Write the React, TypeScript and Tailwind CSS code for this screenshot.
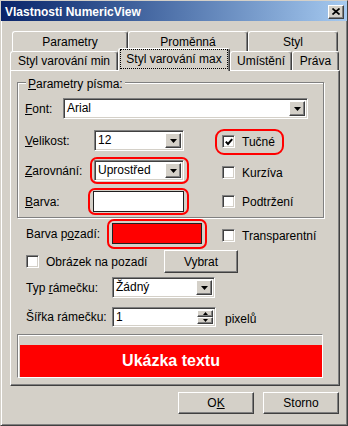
import type { ReactNode } from "react";

const raised =
  "bg-[#d4d0c8] border border-t-white border-l-white border-r-[#404040] border-b-[#404040] shadow-[inset_-1px_-1px_0_#808080]";
const sunken =
  "border border-t-[#808080] border-l-[#808080] border-r-white border-b-white shadow-[inset_1px_1px_0_#404040,inset_-1px_-1px_0_#d4d0c8]";

function Arrow({ up = false }: { up?: boolean }) {
  return (
    <svg width="7" height="4" viewBox="0 0 7 4" className={up ? "rotate-180" : ""}>
      <path d="M0 0h7L3.5 4z" fill="black" />
    </svg>
  );
}

function Combo({ value, width }: { value: string; width: string }) {
  return (
    <div className={`${sunken} ${width} h-[21px] bg-white flex p-[2px] shrink-0`}>
      <span className="flex-1 pl-[1px] leading-[15px]">{value}</span>
      <div className={`${raised} w-[16px] flex items-center justify-center`}>
        <Arrow />
      </div>
    </div>
  );
}

function Check({ checked = false }: { checked?: boolean }) {
  return (
    <div className={`${sunken} w-[13px] h-[13px] bg-white flex items-center justify-center shrink-0`}>
      {checked && (
        <svg width="8" height="8" viewBox="0 0 8 8">
          <path d="M0.8 3.6 L3 6 L7.2 1.2" stroke="black" strokeWidth="2" fill="none" />
        </svg>
      )}
    </div>
  );
}

// red hand-drawn annotation round a control
function Ring({ className }: { className: string }) {
  return <span className={`absolute border-2 border-[#ff0000] pointer-events-none ${className}`} />;
}

function Tab({ w, children }: { w: string; children: ReactNode }) {
  return (
    <div
      className={`${w} h-full border-t border-l border-t-white border-l-white border-r border-r-[#404040] shadow-[inset_-1px_0_0_#808080] rounded-t-[3px] flex items-center justify-center`}
    >
      {children}
    </div>
  );
}

export default function App() {
  return (
    <div className="w-[348px] h-[426px] bg-[#d4d0c8] border border-t-[#d4d0c8] border-l-[#d4d0c8] border-r-[#404040] border-b-[#404040] shadow-[inset_1px_1px_0_white,inset_-1px_-1px_0_#808080] flex flex-col text-[12px] leading-[14px] text-black font-['Liberation_Sans',Arial,sans-serif]">
      {/* title bar */}
      <div className="h-[20px] bg-linear-to-r from-[#0a246a] to-[#a6caf0] flex items-center pl-[4px] pr-[3px] pt-[1px]">
        <span className="flex-1 text-white font-bold text-[12px]">Vlastnosti NumericView</span>
        <div className={`${raised} w-[16px] h-[14px] flex items-center justify-center`}>
          <svg width="8" height="7" viewBox="0 0 8 7">
            <path d="M0.5 0.5L7.5 6.5M7.5 0.5L0.5 6.5" stroke="black" strokeWidth="1.7" />
          </svg>
        </div>
      </div>

      {/* tabs */}
      <div className="mt-[10px] ml-[9px] w-[330px]">
        <div className="flex h-[20px] pl-[2px]">
          <Tab w="w-[116px]">Parametry</Tab>
          <Tab w="w-[120px]">Proměnná</Tab>
          <Tab w="w-[90px]">Styl</Tab>
        </div>
        <div className="flex h-[19px] items-start">
          <Tab w="w-[108px]">Styl varování min</Tab>
          <div className="w-[112px] h-[23px] -mt-[3px] relative z-10 bg-[#d4d0c8] border-t border-l border-t-white border-l-white border-r border-r-[#404040] shadow-[inset_-1px_0_0_#808080] rounded-t-[3px]">
            <span className="absolute left-[1px] right-[1px] top-0 h-[20px] border border-dotted border-black flex items-center justify-center">
              Styl varování max
            </span>
          </div>
          <Tab w="w-[62px]">Umístění</Tab>
          <Tab w="w-[47px]">Práva</Tab>
        </div>
      </div>

      {/* tab page */}
      <div className="ml-[9px] w-[330px] h-[316px] border border-t-white border-l-white border-r-[#404040] border-b-[#404040] shadow-[inset_-1px_-1px_0_#808080] flex flex-col">
        <div className="mt-[11px] ml-[6px] w-[307px] h-[136px] relative border border-[#808080] shadow-[inset_1px_1px_0_white,1px_1px_0_white] flex flex-col shrink-0">
          <span className="absolute left-[8px] -top-[6px] px-[2px] bg-[#d4d0c8]">
            <u>P</u>arametry písma:
          </span>

          <div className="mt-[15px] ml-[7px] h-[21px] flex items-center">
            <span className="w-[38px]">
              <u>F</u>ont:
            </span>
            <Combo value="Arial" width="w-[245px]" />
          </div>

          <div className="mt-[11px] ml-[7px] h-[21px] flex items-center">
            <span className="w-[69px]">
              <u>V</u>elikost:
            </span>
            <Combo value="12" width="w-[90px]" />
            <div className="ml-[38px] relative top-[1px] flex items-center">
              <Ring className="-left-[7px] -right-[9px] -top-[6px] -bottom-[6px] rounded-[9px]" />
              <Check checked />
              <span className="ml-[7px]">Tučné</span>
            </div>
          </div>

          <div className="mt-[9px] ml-[7px] h-[21px] flex items-center">
            <span className="w-[69px]">
              <u>Z</u>arovnání:
            </span>
            <div className="relative">
              <Ring className="-left-[4px] -right-[5px] -top-[3px] -bottom-[3px] rounded-[7px]" />
              <Combo value="Uprostřed" width="w-[90px]" />
            </div>
            <div className="ml-[38px] relative top-[2px] flex items-center">
              <Check />
              <span className="ml-[7px]">Kurzíva</span>
            </div>
          </div>

          <div className="mt-[10px] ml-[7px] h-[21px] flex items-center">
            <span className="w-[68px]">
              <u>B</u>arva:
            </span>
            <div className="relative">
              <Ring className="-left-[5px] -right-[5px] -top-[3px] -bottom-[3px] rounded-[7px]" />
              <div className="w-[91px] h-[21px] bg-white border border-[#202020]" />
            </div>
            <div className="ml-[38px] flex items-center">
              <Check />
              <span className="ml-[7px]">Podtržení</span>
            </div>
          </div>
        </div>

        <div className="mt-[5px] ml-[15px] h-[21px] flex items-center">
          <span className="w-[86px]">
            Barva p<u>o</u>zadí:
          </span>
          <div className="relative">
            <Ring className="-left-[5px] -right-[5px] -top-[4px] -bottom-[5px] rounded-[7px]" />
            <div className="w-[90px] h-[21px] bg-[#ff0000] border border-[#202020]" />
          </div>
          <div className="ml-[20px] relative top-[2px] flex items-center">
            <Check />
            <span className="ml-[7px]">Transparentní</span>
          </div>
        </div>

        <div className="mt-[6px] ml-[15px] h-[23px] flex items-center">
          <Check />
          <span className="ml-[7px] w-[118px]">Obrázek na pozadí</span>
          <div className={`${raised} w-[74px] h-[23px] flex items-center justify-center`}>Vybrat</div>
        </div>

        <div className="mt-[4px] ml-[15px] h-[21px] flex items-center">
          <span className="w-[86px]">
            Typ <u>r</u>ámečku:
          </span>
          <Combo value="Žádný" width="w-[103px]" />
        </div>

        <div className="mt-[9px] ml-[15px] h-[20px] flex items-center">
          <span className="w-[86px]">Šířka rámečku:</span>
          <div className={`${sunken} w-[104px] h-[20px] bg-white flex p-[2px]`}>
            <span className="flex-1 pl-[1px] leading-[14px]">1</span>
            <div className="w-[16px] flex flex-col">
              <div className={`${raised} flex-1 flex items-center justify-center`}>
                <svg width="5" height="3" viewBox="0 0 5 3">
                  <path d="M0 3h5L2.5 0z" fill="black" />
                </svg>
              </div>
              <div className={`${raised} flex-1 flex items-center justify-center`}>
                <svg width="5" height="3" viewBox="0 0 5 3">
                  <path d="M0 0h5L2.5 3z" fill="black" />
                </svg>
              </div>
            </div>
          </div>
          <span className="ml-[9px] relative top-[2px]">pixelů</span>
        </div>

        <div className="mt-[7px] ml-[6px] w-[306px] h-[44px] border border-t-[#808080] border-l-[#808080] border-r-white border-b-white shadow-[inset_1px_1px_0_white] pt-[10px] pl-[2px]">
          <div className="h-full bg-[#ff0000] flex items-center justify-center text-white font-bold text-[16px]">
            Ukázka textu
          </div>
        </div>
      </div>

      {/* dialog buttons */}
      <div className="mt-[6px] h-[22px] flex justify-end gap-[9px] pr-[8px]">
        <div className={`${raised} w-[76px] flex items-center justify-center`}>
          O<u>K</u>
        </div>
        <div className={`${raised} w-[76px] flex items-center justify-center`}>Storno</div>
      </div>
    </div>
  );
}
